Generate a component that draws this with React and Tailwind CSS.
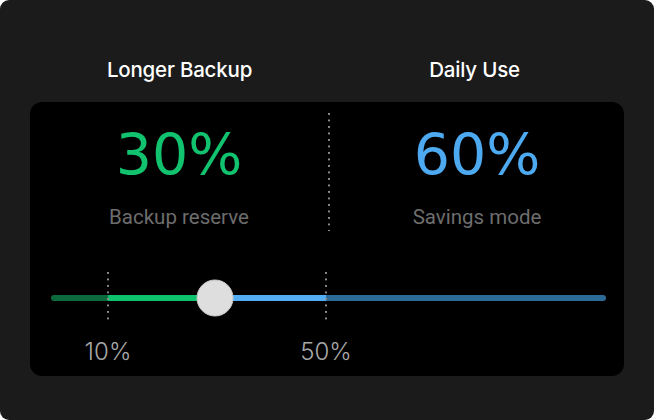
import React from "react";

const Dashed = ({ className = "", style }) => (
  <div
    style={style}
    className={
      "w-[2px] bg-[linear-gradient(to_bottom,#8c8c8c_2px,transparent_2px)] bg-[length:2px_6.5px] " +
      className
    }
  />
);

export default function App() {
  const ticks = [
    { label: "10%", x: 57 },
    { label: "50%", x: 275 },
  ];
  const thumbX = 164;
  return (
    <div className="w-[654px] h-[420px] bg-white">
      <div className="w-[654px] h-[420px] bg-[#1b1b1b] rounded-[9px] px-[30px] flex flex-col">
        <div className="grid grid-cols-2 h-[102px] items-end pb-[22px] text-white text-[20.5px] font-medium tracking-[-0.2px] font-['Inter',sans-serif] leading-none">
          <div className="text-center pl-[2px]">Longer Backup</div>
          <div className="text-center pr-[2px]">Daily Use</div>
        </div>
        <div className="bg-black rounded-[12px] h-[274px] flex flex-col">
          <div className="flex h-[140px] pt-[11px]">
            <div className="w-[298px] flex flex-col items-center">
              <div className="mt-[14px] text-[57px] leading-none text-[#11c26e] font-['DejaVu_Sans',sans-serif]">
                30%
              </div>
              <div className="mt-[23px] text-[20.5px] leading-none text-[#6d6d6d] font-['Roboto',sans-serif]">
                Backup reserve
              </div>
            </div>
            <Dashed className="h-[118px]" />
            <div className="flex-1 flex flex-col items-center">
              <div className="mt-[14px] text-[57px] leading-none text-[#4eaaf0] font-['DejaVu_Sans',sans-serif]">
                60%
              </div>
              <div className="mt-[23px] text-[20.5px] leading-none text-[#6d6d6d] font-['Roboto',sans-serif]">
                Savings mode
              </div>
            </div>
          </div>
          <div className="pl-[21px] pr-[18px] pt-[30px]">
            <div className="relative h-[52px] flex items-center">
              <div className="w-full h-[6px] rounded-full overflow-hidden flex">
                <div className="w-[57px] bg-[#0b6b3d]" />
                <div className="w-[107px] bg-[#0ec16c]" />
                <div className="w-[111px] bg-[#53aef5]" />
                <div className="flex-1 bg-[#2c6a98]" />
              </div>
              {ticks.map((t) => (
                <Dashed
                  key={t.label}
                  className="absolute top-0 h-[52px] -translate-x-1/2"
                  style={{ left: `${t.x}px` }}
                />
              ))}
              <div
                className="absolute top-1/2 w-[37px] h-[37px] rounded-full bg-[#dedede] border border-[#c8c8c8] -translate-x-1/2 -translate-y-1/2"
                style={{ left: `${thumbX}px` }}
              />
            </div>
            <div className="relative h-[40px]">
              {ticks.map((t) => (
                <div
                  key={t.label}
                  className="absolute top-[16px] -translate-x-1/2 text-[24px] leading-none font-light text-[#a8a8a8] font-['Inter',sans-serif]"
                  style={{ left: `${t.x}px` }}
                >
                  {t.label}
                </div>
              ))}
            </div>
          </div>
        </div>
      </div>
    </div>
  );
}
